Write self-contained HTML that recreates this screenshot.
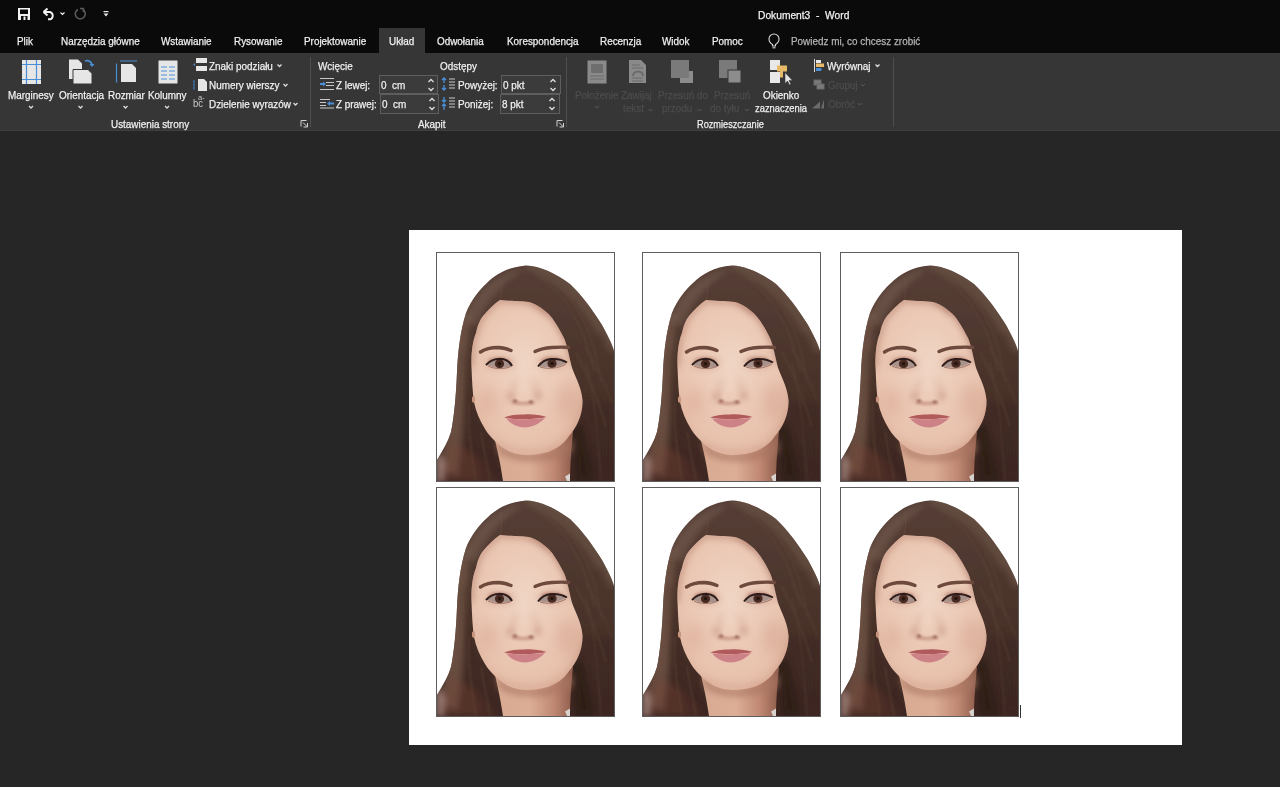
<!DOCTYPE html>
<html><head><meta charset="utf-8">
<style>
*{margin:0;padding:0;box-sizing:border-box}
html,body{width:1280px;height:787px;overflow:hidden;background:#262626;font-family:"Liberation Sans",sans-serif;color:#fff}
.abs{position:absolute}
#title{left:0;top:0;width:1280px;height:53px;background:#0a0a0a}
#ribbon{left:0;top:53px;width:1280px;height:78px;background:#363636}
#page{left:409px;top:230px;width:773px;height:515px;background:#fff}
.photo{position:absolute;width:179px;height:230px}
.photo svg{display:block}
.t{position:absolute;white-space:nowrap;font-size:11px;line-height:13px;transform:scaleX(0.9);transform-origin:0 0;color:#f0f0f0;-webkit-text-stroke:0.25px currentColor}
</style></head><body>
<div id="title" class="abs"></div>
<div id="ribbon" class="abs"></div>
<div class="abs" style="left:0;top:130px;width:1280px;height:1px;background:#3f3f3f"></div>
<!-- RIBBON START -->
<div id="uklad" class="abs" style="left:379px;top:28px;width:46px;height:25px;background:#363636"></div>
<svg class="abs" style="left:0;top:0" width="1280" height="131">
 <!-- QAT -->
 <rect x="18" y="8" width="12" height="12" fill="#f2f2f2"/>
 <rect x="20" y="9.5" width="8" height="4.5" fill="#0a0a0a"/>
 <rect x="21" y="16" width="6.5" height="4" fill="#0a0a0a"/>
 <rect x="23.5" y="16.5" width="2" height="3.5" fill="#f2f2f2"/>
 <path d="M43.5,12 L47.5,8.5 M43.5,12 L47.5,15.5 M43.5,12 H50 a3.8,3.8 0 0 1 0,7.3 H48" stroke="#f2f2f2" stroke-width="1.9" fill="none"/>
 <path d="M60.5,12.5 l2,2 l2,-2" stroke="#f2f2f2" stroke-width="1.1" fill="none"/>
 <path d="M82.5,9.5 a5,5 0 1 1 -4.5,0" stroke="#5a5a5a" stroke-width="1.6" fill="none"/>
 <path d="M80,8.5 h3.5 v3.5" stroke="#5a5a5a" stroke-width="1.4" fill="none"/>
 <rect x="103.5" y="11" width="5" height="1.2" fill="#e8e8e8"/>
 <path d="M103.5,13.5 h5 l-2.5,3 z" fill="#e8e8e8"/>
 <!-- lightbulb -->
 <path d="M772.5,44.5 c-2.5,-1.5 -3.5,-3.5 -3.5,-5.5 a5,5 0 0 1 10,0 c0,2 -1,4 -3.5,5.5 v1.5 h-3 z" stroke="#d8d8d8" stroke-width="1.1" fill="none"/>
 <path d="M772.5,47.8 h3" stroke="#d8d8d8" stroke-width="1.1"/>
 <!-- Ustawienia strony icons -->
 <rect x="22" y="60" width="19" height="24" fill="#e6e6e6"/>
 <path d="M26.5,60 v24 M36.5,60 v24 M22,64.5 h19 M22,79.5 h19" stroke="#4a8fd6" stroke-width="1.2"/>
 <path d="M69,59.5 h9 l4,4 v15.5 h-13 z" fill="#e6e6e6"/>
 <path d="M73,69.5 h15 l4,4 v10.5 h-19 z" fill="#e6e6e6" stroke="#363636" stroke-width="1"/>
 <path d="M85,61 a5,5 0 0 1 7,4" stroke="#4a8fd6" stroke-width="1.8" fill="none"/>
 <path d="M89.5,64 l2.5,3 l2.5,-3 z" fill="#4a8fd6"/>
 <path d="M121,64 h11 l4,4 v14 h-15 z" fill="#e6e6e6"/>
 <path d="M120,61 h17 M116.5,63.5 v19" stroke="#4a8fd6" stroke-width="1.2"/>
 <rect x="158.5" y="60.5" width="19" height="23" fill="#e6e6e6"/>
 <path d="M161,67 h6 M169,67 h6 M161,71 h6 M169,71 h6 M161,75 h6 M169,75 h6 M161,79 h6 M169,79 h6" stroke="#4a8fd6" stroke-width="1.1"/>
 <g stroke="#dcdcdc" stroke-width="1.3" fill="none">
  <path d="M29,106 l2,2 l2,-2 M78.5,106 l2,2 l2,-2 M123.5,106 l2,2 l2,-2 M165,106 l2,2 l2,-2"/>
 </g>
 <!-- small buttons -->
 <rect x="196" y="58" width="11" height="5" fill="#e6e6e6"/>
 <rect x="196" y="66" width="11" height="5" fill="#e6e6e6"/>
 <path d="M193,64.5 l2,-1.5 v3 z" fill="#4a8fd6"/>
 <path d="M198,79 h6 l3,3 v9 h-9 z" fill="#e6e6e6"/>
 <path d="M194,80 v10 M193,82 h2 M193,85 h2 M193,88 h2" stroke="#3a78b8" stroke-width="0.9"/>
 <g stroke="#dcdcdc" stroke-width="1.3" fill="none">
  <path d="M277.5,64.5 l2,2 l2,-2 M283.5,84 l2,2 l2,-2 M293.5,103 l2,2 l2,-2"/>
 </g>
 <path d="M306.5,120.5 h-5.5 v6 M303,122.5 l4.5,4.5 M307.5,123 v4 h-4" stroke="#d0d0d0" stroke-width="1" fill="none"/>
 <path d="M310.5,57 v70 M566.5,57 v70 M893.5,57 v70" stroke="#4e4e4e" stroke-width="1"/>
 <!-- Akapit -->
 <path d="M320,78.5 h14 M326,82.5 h8 M326,85.5 h8 M320,89.5 h14" stroke="#c8c8c8" stroke-width="1.2"/>
 <path d="M320,84 h4" stroke="#4a8fd6" stroke-width="2"/><path d="M323,81.5 l3,2.5 l-3,2.5 z" fill="#4a8fd6"/>
 <path d="M320,99.5 h10 M320,102.5 h6 M320,105.5 h6 M320,108 h14" stroke="#c8c8c8" stroke-width="1.2"/>
 <path d="M330,103.5 h4" stroke="#4a8fd6" stroke-width="2"/><path d="M330,101 l-3,2.5 l3,2.5 z" fill="#4a8fd6"/>
 <g fill="#3b3b3b" stroke="#5e5e5e" stroke-width="1">
  <rect x="379.5" y="75.5" width="58" height="18"/>
  <rect x="380.5" y="94.5" width="58" height="19"/>
  <rect x="501.5" y="75.5" width="59" height="18"/>
  <rect x="500.5" y="94.5" width="59" height="19"/>
 </g>
 <g stroke="#e0e0e0" stroke-width="1.3" fill="none">
  <path d="M428.5,82 l2.5,-2.5 l2.5,2.5 M428.5,88 l2.5,2.5 l2.5,-2.5 M429.5,101 l2.5,-2.5 l2.5,2.5 M429.5,107 l2.5,2.5 l2.5,-2.5"/>
  <path d="M550.5,82 l2.5,-2.5 l2.5,2.5 M550.5,88 l2.5,2.5 l2.5,-2.5 M549.5,101 l2.5,-2.5 l2.5,2.5 M549.5,107 l2.5,2.5 l2.5,-2.5"/>
 </g>
 <g stroke="#4a8fd6" stroke-width="1.3" fill="none">
  <path d="M444,78 v5 M442,80 l2,-2 l2,2 M444,85 v5 M442,88 l2,2 l2,-2"/>
  <path d="M444,97 v5 M442,100 l2,2 l2,-2 M444,104 v6 M442,106 l2,-2 l2,2"/>
 </g>
 <path d="M449,79 h6 M449,82 h6 M449,85 h6 M449,88 h6 M449,98 h6 M449,101 h6 M449,104 h6 M449,107 h6" stroke="#c8c8c8" stroke-width="1.1"/>
 <path d="M562.5,120.5 h-5.5 v6 M559,122.5 l4.5,4.5 M563.5,123 v4 h-4" stroke="#d0d0d0" stroke-width="1" fill="none"/>
 <!-- Rozmieszczanie -->
 <rect x="587.5" y="60.5" width="19" height="23" fill="#8a8a8a"/>
 <rect x="591" y="64" width="12" height="9" fill="#6e6e6e"/>
 <path d="M590,76 h14 M590,79 h14" stroke="#6a6a6a" stroke-width="1"/>
 <path d="M629,60 h12 l5,5 v18 h-17 z" fill="#8a8a8a"/>
 <path d="M632,65 h8 M632,68 h11 M632,78 h11 M632,81 h11" stroke="#6a6a6a" stroke-width="1"/>
 <path d="M633,76 a5,4.5 0 0 1 10,0" stroke="#6a6a6a" stroke-width="2" fill="none"/>
 <rect x="680" y="71" width="13" height="12" fill="#8c8c8c"/>
 <rect x="671" y="60" width="18" height="18" fill="#7a7a7a"/>
 <rect x="719" y="60" width="18" height="18" fill="#7a7a7a"/>
 <rect x="728" y="70" width="13" height="13" fill="#8c8c8c" stroke="#363636" stroke-width="1"/>
 <g stroke="#5a5a5a" stroke-width="1" fill="none">
  <path d="M595,106 l2,2 l2,-2 M648.5,109 l2,2 l2,-2 M697.5,109 l2,2 l2,-2 M745,109 l2,2 l2,-2"/>
 </g>
 <rect x="770" y="60" width="10" height="10" fill="#e8e8e8"/>
 <rect x="770" y="72" width="10" height="11" fill="#e8e8e8"/>
 <path d="M777,65.5 h10 v6 h-4 v6 h-3 v-6 h-3 z" fill="#e8b968"/>
 <path d="M785,72.5 v11 l2.5,-2.5 l2,4 l1.5,-0.8 l-2,-3.8 h3.5 z" fill="#e8e8e8" stroke="#363636" stroke-width="0.6"/>
 <path d="M814.5,59 v13" stroke="#d8d8d8" stroke-width="1"/>
 <rect x="816" y="60" width="5" height="3" fill="#e8e8e8"/>
 <rect x="816" y="63.5" width="8" height="3.5" fill="#e8b968"/>
 <path d="M816,68 h5 a2,2 0 0 1 0,3 h-5 z" fill="#4a8fd6"/>
 <g stroke="#6a6a6a" stroke-width="1" fill="none">
  <rect x="814" y="80" width="7" height="5" fill="#7a7a7a"/><rect x="817" y="84" width="7" height="5" fill="#7a7a7a"/>
 </g>
 <path d="M812,108.5 l8,-7 v7 z M821,108.5 l3,-9 v9 z" fill="#6a6a6a"/>
 <path d="M875.5,64.5 l2,2 l2,-2" stroke="#dcdcdc" stroke-width="1.3" fill="none"/>
 <path d="M861,84 l2,2 l2,-2 M857.5,103 l2,2 l2,-2" stroke="#5a5a5a" stroke-width="1" fill="none"/>
</svg>
<div class="t" style="left:758px;top:9px;color:#f2f2f2;transform:scaleX(0.93)">Dokument3&nbsp; -&nbsp; Word</div>
<div class="t" style="left:17px;top:35px">Plik</div>
<div class="t" style="left:61px;top:35px">Narzędzia główne</div>
<div class="t" style="left:161px;top:35px">Wstawianie</div>
<div class="t" style="left:234px;top:35px">Rysowanie</div>
<div class="t" style="left:304px;top:35px">Projektowanie</div>
<div class="t" style="left:389px;top:35px">Układ</div>
<div class="t" style="left:437px;top:35px">Odwołania</div>
<div class="t" style="left:507px;top:35px">Korespondencja</div>
<div class="t" style="left:600px;top:35px">Recenzja</div>
<div class="t" style="left:662px;top:35px">Widok</div>
<div class="t" style="left:712px;top:35px">Pomoc</div>
<div class="t" style="left:791px;top:35px;color:#b4b4b4">Powiedz mi, co chcesz zrobić</div>

<div class="t" style="left:8px;top:89px">Marginesy</div>
<div class="t" style="left:59px;top:89px">Orientacja</div>
<div class="t" style="left:108px;top:89px">Rozmiar</div>
<div class="t" style="left:148px;top:89px">Kolumny</div>
<div class="t" style="left:209px;top:60px">Znaki podziału</div>
<div class="t" style="left:209px;top:79px">Numery wierszy</div>
<div class="t" style="left:209px;top:98px">Dzielenie wyrazów</div>
<div class="abs" style="left:193px;top:99px;font-size:10px;line-height:10px;color:#c8c8c8;font-family:'Liberation Sans';transform:scaleX(0.95);transform-origin:0 0">bc</div>
<div class="abs" style="left:198px;top:94px;font-size:8px;line-height:8px;color:#c8c8c8;font-family:'Liberation Sans';transform:scaleX(0.95);transform-origin:0 0">a-</div>
<div class="t" style="left:111px;top:118px">Ustawienia strony</div>

<div class="t" style="left:318px;top:60px">Wcięcie</div>
<div class="t" style="left:336px;top:79px">Z lewej:</div>
<div class="t" style="left:336px;top:98px">Z prawej:</div>
<div class="t" style="left:381px;top:79px">0&nbsp; cm</div>
<div class="t" style="left:382px;top:98px">0&nbsp; cm</div>
<div class="t" style="left:440px;top:60px">Odstępy</div>
<div class="t" style="left:458px;top:79px">Powyżej:</div>
<div class="t" style="left:458px;top:98px">Poniżej:</div>
<div class="t" style="left:503px;top:79px">0 pkt</div>
<div class="t" style="left:502px;top:98px">8 pkt</div>
<div class="t" style="left:418px;top:118px">Akapit</div>

<div class="t" style="left:575px;top:89px;color:#4c4c4c">Położenie</div>
<div class="t" style="left:621px;top:89px;color:#4c4c4c">Zawijaj</div>
<div class="t" style="left:623px;top:102px;color:#4c4c4c">tekst</div>
<div class="t" style="left:658px;top:89px;color:#4c4c4c">Przesuń do</div>
<div class="t" style="left:662px;top:102px;color:#4c4c4c">przodu</div>
<div class="t" style="left:714px;top:89px;color:#4c4c4c">Przesuń</div>
<div class="t" style="left:710px;top:102px;color:#4c4c4c">do tyłu</div>
<div class="t" style="left:763px;top:89px">Okienko</div>
<div class="t" style="left:755px;top:102px;transform:scaleX(0.85)">zaznaczenia</div>
<div class="t" style="left:827px;top:60px">Wyrównaj</div>
<div class="t" style="left:828px;top:79px;color:#4c4c4c">Grupuj</div>
<div class="t" style="left:828px;top:98px;color:#4c4c4c">Obróć</div>
<div class="t" style="left:697px;top:118px;transform:scaleX(0.835)">Rozmieszczanie</div>
<!-- RIBBON END -->

<div id="page" class="abs"></div>

<svg width="0" height="0" style="position:absolute">
<defs>
 <filter id="b1" filterUnits="userSpaceOnUse" x="-20" y="-20" width="220" height="270"><feGaussianBlur stdDeviation="1"/></filter>
 <filter id="b2" filterUnits="userSpaceOnUse" x="-20" y="-20" width="220" height="270"><feGaussianBlur stdDeviation="3"/></filter>
 <filter id="b5" filterUnits="userSpaceOnUse" x="-20" y="-20" width="220" height="270"><feGaussianBlur stdDeviation="6"/></filter>
 <filter id="b06" filterUnits="userSpaceOnUse" x="-20" y="-20" width="220" height="270"><feGaussianBlur stdDeviation="0.6"/></filter>
 <filter id="b05" filterUnits="userSpaceOnUse" x="-20" y="-20" width="220" height="270"><feGaussianBlur stdDeviation="0.5"/></filter>
 <clipPath id="hairClip"><path d="M90,13.5 C104,14 119,21 134,32 C146,43 158,60 166,73 C172,84 176,92 178,99 L178,229 L1,229 L1,208 C7,198 12,190 15,180 C18,165 20,145 21,120 C22,100 24,80 30,61 C35,48 44,37 51,31 C60,22 72,15 90,13.5 Z"/></clipPath>
 <clipPath id="faceClip"><path d="M64,48 C72,49 84,49 90,49.7 C98,50 106,56 112,61.4 C118,67 124,78 128,86 C131,93 133,103 135,112 C137,122 145,132 146.5,148 C147,162 141,175 133,184 C128,192 120,197 112,200 C105,202 97,203 90,203 C80,202.5 72,200 64,193.5 C57,188 52,182 49,177 C44,169 40,160 38,150 C36.5,140 36,128 35.5,115 C35,105 36,90 40,81 C42,72 44,68 47,64 C52,58 58,52 64,48 Z"/></clipPath>
 <linearGradient id="hairTop" x1="0" y1="0" x2="0" y2="1">
  <stop offset="0" stop-color="#574038"/>
  <stop offset="0.5" stop-color="#4b342b"/>
  <stop offset="1" stop-color="#3e2823"/>
 </linearGradient>
 <linearGradient id="neckG" x1="58" y1="0" x2="138" y2="0" gradientUnits="userSpaceOnUse">
  <stop offset="0" stop-color="#d8aa92"/>
  <stop offset="0.45" stop-color="#dcae96"/>
  <stop offset="0.75" stop-color="#c08872"/>
  <stop offset="1" stop-color="#8a5a4a"/>
 </linearGradient>
 <radialGradient id="skinG" cx="0.5" cy="0.48" r="0.62">
  <stop offset="0" stop-color="#f0d5c4"/>
  <stop offset="0.55" stop-color="#e8c2ad"/>
  <stop offset="0.85" stop-color="#daaa94"/>
  <stop offset="1" stop-color="#c08a78"/>
 </radialGradient>
 <symbol id="face" viewBox="0 0 179 230">
  <rect x="0.5" y="0.5" width="178" height="229" fill="#fff"/>
  <g filter="url(#b06)">
  <g clip-path="url(#hairClip)">
   <rect x="0" y="0" width="179" height="230" fill="url(#hairTop)"/>
   <!-- light left edge -->
   <path d="M20,60 C15,100 14,160 4,215 L22,225 C30,170 30,110 34,60 Z" fill="#735848" filter="url(#b2)" opacity="0.75"/>
   <path d="M0,200 C10,205 14,215 8,230 L0,230 Z" fill="#b09088" filter="url(#b2)" opacity="0.7"/>
   <!-- reddish bottom left -->
   <path d="M12,190 C30,195 50,205 60,229 L8,229 Z" fill="#7a4234" filter="url(#b2)" opacity="0.35"/>
   <!-- dark under right -->
   <path d="M140,150 C160,170 160,200 150,229 L178,229 L178,150 Z" fill="#3a2620" filter="url(#b5)" opacity="0.5"/>
   <path d="M132,180 C140,200 138,215 140,229 L158,229 C156,210 150,190 146,170 Z" fill="#2a1a18" filter="url(#b2)" opacity="0.75"/>
   <!-- dark near left face -->
   <path d="M32,100 C30,140 37,180 58,200 L62,229 L46,229 C34,190 28,150 28,100 Z" fill="#3e2820" filter="url(#b2)" opacity="0.5"/>
   <!-- streaks -->
   <g stroke="#6e5444" stroke-width="1.5" fill="none" opacity="0.28" filter="url(#b1)">
    <path d="M120,30 C145,55 160,90 165,130"/>
    <path d="M105,25 C135,50 150,80 158,120"/>
    <path d="M150,110 C160,150 162,190 165,229"/>
    <path d="M140,100 C150,120 160,140 170,175" stroke-width="2"/>
    <path d="M150,95 C160,115 168,130 176,150" stroke-width="2"/>
    <path d="M40,45 C30,70 27,100 26,140"/>
    <path d="M27,120 C26,160 22,190 12,215" stroke-width="2"/>
    <path d="M33,150 C32,180 35,200 40,229" stroke-width="2"/>
    <path d="M45,180 C48,200 52,215 54,229" stroke-width="2"/>
   </g>
   <path d="M64,26 C66,32 66,40 64,48" stroke="#7a6050" stroke-width="1" fill="none" opacity="0.3" filter="url(#b05)"/>
   <!-- outer edge highlight -->
   <path d="M90,13.5 C104,14 119,21 134,32 C146,43 158,60 166,73 C172,84 176,92 178,99" stroke="#76604f" stroke-width="10" fill="none" filter="url(#b2)" opacity="0.5"/>
   <!-- top-left highlight -->
   <path d="M28,70 C32,45 55,22 90,16 C70,28 52,45 40,75 Z" fill="#7a6254" filter="url(#b2)" opacity="0.55"/>
   <path d="M100,18 C125,24 150,45 168,80 L160,82 C145,55 125,35 100,24 Z" fill="#6a5244" filter="url(#b2)" opacity="0.5"/>
  </g>
  <!-- neck -->
  <path d="M57,180 C62,200 65,215 67,229 L134,229 C134,215 135,200 137,180 Z" fill="url(#neckG)"/>
  <path d="M60,188 C75,205 110,208 137,186 L137,200 C110,214 75,212 62,200 Z" fill="#a87462" filter="url(#b2)" opacity="0.6"/>
  <path d="M129,224.5 L134,221.5 L134,229 L131,229 Z" fill="#d8d2ce"/>
  <!-- face -->
  <g clip-path="url(#faceClip)">
   <rect x="0" y="0" width="179" height="230" fill="url(#skinG)"/>
   <!-- forehead shade under hairline right -->
   <path d="M90,49 C110,55 128,80 135,112 L150,112 L150,40 Z" fill="#a87060" filter="url(#b2)" opacity="0.6"/>
   <!-- hairline soft shade -->
   <path d="M64,48 C72,49 84,49 90,49.7 C98,50 106,56 112,61.4 M64,48 C58,52 52,58 47,64 C44,68 42,72 40,81 C36,90 35.5,105 35.5,115" stroke="#b07a66" stroke-width="5" fill="none" filter="url(#b2)" opacity="0.6"/>
   <!-- nose bridge highlight -->
   <ellipse cx="87" cy="126" rx="5" ry="18" fill="#f2d6c6" filter="url(#b2)" opacity="0.5"/>
   <!-- side shade of nose -->
   <path d="M79.5,128 C78,135 75,141 73,147" stroke="#c48e78" stroke-width="3" fill="none" filter="url(#b2)" opacity="0.35"/>
   <path d="M97.5,128 C99.5,135 102,139 104,146" stroke="#c48e78" stroke-width="3" fill="none" filter="url(#b2)" opacity="0.35"/>
   <!-- cheek blush -->
   <ellipse cx="132" cy="150" rx="12" ry="18" fill="#d09a86" filter="url(#b5)" opacity="0.35"/>
   <ellipse cx="52" cy="150" rx="10" ry="14" fill="#d9a590" filter="url(#b5)" opacity="0.4"/>
   <!-- right periphery shade -->
   <path d="M150,110 C152,150 145,185 115,205 L150,230 L180,230 L180,110 Z" fill="#b07c68" filter="url(#b5)" opacity="0.55"/>
   <path d="M28,110 C30,150 40,185 70,205 L30,230 L0,230 L0,110 Z" fill="#c08c78" filter="url(#b5)" opacity="0.35"/>
   <!-- eye sockets -->
   <ellipse cx="64" cy="111" rx="14" ry="6" fill="#c89482" filter="url(#b2)" opacity="0.6"/>
   <ellipse cx="116" cy="110.5" rx="14" ry="6" fill="#c89482" filter="url(#b2)" opacity="0.6"/>
  </g>
  </g>
  <!-- ear bump -->
  <ellipse cx="37.5" cy="147.5" rx="1.6" ry="3.2" fill="#c8967f" filter="url(#b05)"/>
  <!-- eyebrows -->
  <path d="M44.5,100 C49,97 55,95.5 62,95.5 C68,95.8 72,97 75,98.5" stroke="#6e4a3c" stroke-width="3.4" fill="none" stroke-linecap="round" filter="url(#b05)"/>
  <path d="M99,99.5 C103,97.5 109,96 116,95.5 C123,95 129,95 132.5,95.5" stroke="#6e4a3c" stroke-width="3.4" fill="none" stroke-linecap="round" filter="url(#b05)"/>
  <!-- eyes -->
  <ellipse cx="63" cy="109" rx="11" ry="4" fill="#a87060" filter="url(#b1)" opacity="0.45"/>
  <ellipse cx="116" cy="108.5" rx="11" ry="4" fill="#a87060" filter="url(#b1)" opacity="0.45"/>
  <g filter="url(#b05)">
  <path d="M51,112.5 C55,108.5 60,107.5 64,107.5 C69,108 73,110.5 75.5,114 C70,116.5 58,116.5 51,112.5 Z" fill="#a8938c"/>
  <circle cx="63.5" cy="111.8" r="4.6" fill="#4a2c22"/>
  <circle cx="63.5" cy="111.8" r="1.8" fill="#22140f"/>
  <path d="M50,113 C54,108.5 59,106.8 64,106.8 C70,107.2 74,110 76,114" stroke="#2e1e1a" stroke-width="2" fill="none"/>
  <path d="M52,114 C58,117 68,117.5 75,114.5" stroke="#a07468" stroke-width="1" fill="none"/>
  <path d="M102.5,114 C105,111 109,108.5 115,108 C121,107.5 126,108.5 130.5,110.5 C124,115 112,116.5 102.5,114 Z" fill="#a8938c"/>
  <circle cx="116" cy="111.5" r="4.6" fill="#4a2c22"/>
  <circle cx="116" cy="111.5" r="1.8" fill="#22140f"/>
  <path d="M102,114.5 C105,110.5 109,107.5 115,107 C122,106.5 127,108 131,110.5" stroke="#2e1e1a" stroke-width="2" fill="none"/>
  <path d="M104,115 C112,117.5 122,116.5 130,112" stroke="#a07468" stroke-width="1" fill="none"/>
  </g>
  <!-- nose -->
  <ellipse cx="75" cy="145" rx="3.5" ry="5" fill="#c08a78" filter="url(#b2)" opacity="0.5"/>
  <ellipse cx="101.5" cy="144" rx="3.5" ry="5" fill="#c08a78" filter="url(#b2)" opacity="0.5"/>
  <ellipse cx="87" cy="151" rx="12" ry="2.5" fill="#c08a78" filter="url(#b1)" opacity="0.6"/>
  <ellipse cx="79" cy="149" rx="2.5" ry="1.4" fill="#9a6656" filter="url(#b1)"/>
  <ellipse cx="95" cy="150" rx="2.5" ry="1.4" fill="#9a6656" filter="url(#b1)"/>
  <ellipse cx="87" cy="145" rx="6" ry="4.5" fill="#edcdb9" filter="url(#b1)" opacity="0.8"/>
  <!-- lips -->
  <path d="M68,165.5 C74,163 82,162 88.5,162.5 C96,162 104,163 110.7,165 C104,166.5 96,167 89,167 C81,167 74,167 68,165.5 Z" fill="#b05a5c" filter="url(#b06)"/>
  <path d="M70,166.5 C78,167.5 100,167.5 109,166 C103,172 96,175.5 89,175.5 C81,175.5 75,172 70,166.5 Z" fill="#cc8286" filter="url(#b06)"/>
  <!-- chin/jaw shadow -->
  <path d="M62,192 C75,201 105,203 120,196" stroke="#b88070" stroke-width="2" fill="none" filter="url(#b2)" opacity="0.5"/>
  <rect x="0.5" y="0.5" width="178" height="229" fill="none" stroke="#5e5e5e" stroke-width="1"/>
 </symbol>

</defs>
</svg>

<div class="photo" style="left:436px;top:252px"><svg width="179" height="230"><use href="#face"/></svg></div>
<div class="photo" style="left:642px;top:252px"><svg width="179" height="230"><use href="#face"/></svg></div>
<div class="photo" style="left:840px;top:252px"><svg width="179" height="230"><use href="#face"/></svg></div>
<div class="photo" style="left:436px;top:487px"><svg width="179" height="230"><use href="#face"/></svg></div>
<div class="photo" style="left:642px;top:487px"><svg width="179" height="230"><use href="#face"/></svg></div>
<div class="photo" style="left:840px;top:487px"><svg width="179" height="230"><use href="#face"/></svg></div>
<div class="abs" style="left:1020px;top:705px;width:1px;height:13px;background:#333"></div>
</body></html>
